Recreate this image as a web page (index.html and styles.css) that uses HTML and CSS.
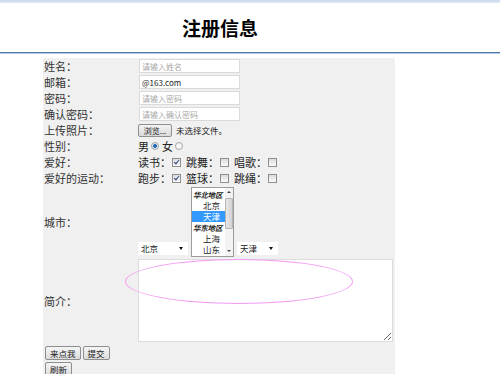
FILE: index.html
```html
<!DOCTYPE html>
<html lang="zh-CN">
<head>
  <meta charset="UTF-8">
  <title>注册信息</title>
  <link rel="stylesheet" href="styles.css">
</head>
<body>
  <div class="topbar"></div>
  <div class="header">
    <h1>注册信息</h1>
  </div>

  <form class="reg-form">
    <table class="reg-table">
      <tr>
        <td class="label">姓名：</td>
        <td><input class="txt" type="text" placeholder="请输入姓名"></td>
      </tr>
      <tr>
        <td class="label">邮箱：</td>
        <td><input class="txt" type="text" value="@163.com"></td>
      </tr>
      <tr>
        <td class="label">密码：</td>
        <td><input class="txt" type="password" placeholder="请输入密码"></td>
      </tr>
      <tr>
        <td class="label">确认密码：</td>
        <td><input class="txt" type="password" placeholder="请输入确认密码"></td>
      </tr>
      <tr>
        <td class="label">上传照片：</td>
        <td>
          <div class="inline">
            <span class="browse">浏览...</span>
            <span class="file-name">未选择文件。</span>
          </div>
        </td>
      </tr>
      <tr>
        <td class="label">性别：</td>
        <td>
          <div class="inline">
            男<span class="radio on"></span>女<span class="radio"></span>
          </div>
        </td>
      </tr>
      <tr>
        <td class="label">爱好：</td>
        <td>
          <div class="inline">
            读书：<span class="chk on"></span>跳舞：<span class="chk"></span>唱歌：<span class="chk"></span>
          </div>
        </td>
      </tr>
      <tr>
        <td class="label">爱好的运动：</td>
        <td>
          <div class="inline">
            跑步：<span class="chk on"></span>篮球：<span class="chk"></span>跳绳：<span class="chk"></span>
          </div>
        </td>
      </tr>
      <tr>
        <td class="label">城市：</td>
        <td>
          <div class="city">
            <div class="sel sel-wide">北京</div>
            <div class="listbox">
              <div class="list-items">
                <div class="group">华北地区</div>
                <div class="opt">北京</div>
                <div class="opt selected">天津</div>
                <div class="group">华东地区</div>
                <div class="opt">上海</div>
                <div class="opt">山东</div>
              </div>
              <div class="scroll">
                <span class="arrow up"></span>
                <span class="thumb"></span>
                <span class="arrow down"></span>
              </div>
            </div>
            <div class="sel">天津</div>
          </div>
        </td>
      </tr>
      <tr>
        <td class="label">简介：</td>
        <td>
          <div class="intro">
            <textarea class="intro-text"></textarea>
            <div class="ring"></div>
          </div>
        </td>
      </tr>
      <tr>
        <td class="label actions-cell">
          <div class="actions">
            <button type="button" class="btn">来点我</button>
            <button type="submit" class="btn">提交</button>
          </div>
          <div class="actions">
            <button type="reset" class="btn">刷新</button>
          </div>
        </td>
        <td></td>
      </tr>
    </table>
  </form>
</body>
</html>
```

FILE: styles.css
```css
body {
  margin: 0;
  font-family: "Noto Sans CJK SC", "DejaVu Sans", sans-serif;
  background: #fff;
  color: #222;
}

.topbar {
  height: 3px;
  background: linear-gradient(#c9d9ee, #e2eaf6);
}

.header {
  height: 49px;
  border-bottom: 1px solid #4a76a8;
  box-shadow: 0 1px 0 #b8cbe2;
}

.header h1 {
  margin: 0;
  padding-left: 182px;
  font-size: 19px;
  line-height: 50px;
  color: #000;
}

.reg-form {
  margin: 5px 0 0 43px;
  width: 352px;
  background: #f0f0f0;
  border-radius: 2px;
}

.reg-table {
  width: 100%;
  border-collapse: collapse;
}

.reg-table td {
  padding: 0;
  height: 16px;
  font-size: 11px;
  line-height: 16px;
  vertical-align: middle;
}

.reg-table td.label {
  width: 94px;
  padding-left: 1px;
  color: #333;
}

.txt {
  display: block;
  box-sizing: border-box;
  width: 101px;
  height: 14px;
  margin: 1px 0 1px 1px;
  padding: 0 2px;
  border: 1px solid #dadada;
  background: #fff;
  font-family: "Noto Sans CJK SC", sans-serif;
  font-size: 8px;
  color: #222;
  outline: none;
}

.txt::placeholder {
  color: #a8a8a8;
}

.inline {
  display: flex;
  align-items: center;
  height: 16px;
}

.browse {
  display: inline-block;
  box-sizing: border-box;
  width: 34px;
  height: 13px;
  border: 1px solid #8e8f8f;
  border-radius: 2px;
  background: linear-gradient(#f3f3f3, #dadada);
  font-size: 8px;
  line-height: 11px;
  text-align: center;
}

.file-name {
  margin-left: 4px;
  font-size: 8.5px;
}

.radio {
  display: inline-block;
  width: 6px;
  height: 6px;
  margin: 0 3px 0 2px;
  border: 1px solid #a6a6a6;
  border-radius: 50%;
  background: #f6f6f6;
}

.radio.on {
  background: radial-gradient(circle, #2a6cb6 0 1.6px, #d9e6f3 2.2px);
}

.chk {
  position: relative;
  display: inline-block;
  width: 7px;
  height: 7px;
  margin: 0 5px 0 1px;
  border: 1px solid #8f8f8f;
  background: linear-gradient(#dcdcdc, #fafafa);
}

.chk.on::after {
  content: "";
  position: absolute;
  left: 2px;
  top: 0;
  width: 2px;
  height: 4px;
  border: solid #2b3f7a;
  border-width: 0 1px 1px 0;
  transform: rotate(40deg);
}

.city {
  display: flex;
  align-items: flex-end;
  gap: 3px;
  padding: 1px 0;
}

.sel {
  position: relative;
  box-sizing: border-box;
  width: 41px;
  height: 13px;
  margin-bottom: 2px;
  padding-left: 3px;
  background: #fff;
  font-size: 8.5px;
  line-height: 13px;
}

.sel-wide {
  width: 50px;
}

.sel::after {
  content: "";
  position: absolute;
  right: 5px;
  top: 5px;
  border-left: 2.5px solid transparent;
  border-right: 2.5px solid transparent;
  border-top: 3px solid #111;
}

.listbox {
  display: flex;
  box-sizing: border-box;
  width: 43px;
  height: 70px;
  border: 1px solid #9c9c9c;
  background: #fff;
}

.list-items {
  flex: 1;
  padding-top: 1px;
  overflow: hidden;
}

.list-items div {
  height: 11px;
  font-size: 8.5px;
  line-height: 11px;
  white-space: nowrap;
}

.list-items .group {
  padding-left: 1px;
  font-size: 7.5px;
  font-weight: bold;
  font-style: italic;
  letter-spacing: -0.2px;
}

.opt {
  padding-left: 11px;
}

.opt.selected {
  background: #3399ff;
  color: #fff;
}

.scroll {
  display: flex;
  flex-direction: column;
  width: 8px;
  background: #f3f3f3;
}

.arrow {
  position: relative;
  height: 9px;
}

.arrow::after {
  content: "";
  position: absolute;
  left: 2px;
  top: 3px;
  border-left: 2px solid transparent;
  border-right: 2px solid transparent;
}

.arrow.up::after {
  border-bottom: 2px solid #444;
}

.arrow.down {
  margin-top: auto;
}

.arrow.down::after {
  border-top: 2px solid #444;
}

.thumb {
  box-sizing: border-box;
  height: 31px;
  margin: 1px 0 0 0;
  border: 1px solid #b5b5b5;
  border-radius: 1px;
  background: linear-gradient(90deg, #e8e8e8, #d2d2d2);
}

.intro {
  position: relative;
}

.intro-text {
  display: block;
  box-sizing: border-box;
  width: 255px;
  height: 83px;
  margin: 1px 0 2px;
  border: 1px solid #dcdcdc;
  background: #fff;
  outline: none;
}

.ring {
  position: absolute;
  left: -13px;
  top: 0;
  width: 226px;
  height: 43px;
  border: 1px solid #f39af3;
  border-radius: 50%;
}

.reg-table td.actions-cell {
  vertical-align: top;
}

.actions {
  display: flex;
  gap: 2px;
  padding: 2px 0 0 1px;
}

.btn {
  box-sizing: border-box;
  height: 14px;
  padding: 0 4px;
  border: 1px solid #8e8e8e;
  border-radius: 2px;
  background: linear-gradient(#f5f5f5, #dcdcdc);
  font-family: "Noto Sans CJK SC", sans-serif;
  font-size: 8.5px;
  line-height: 12px;
  color: #222;
}
```
